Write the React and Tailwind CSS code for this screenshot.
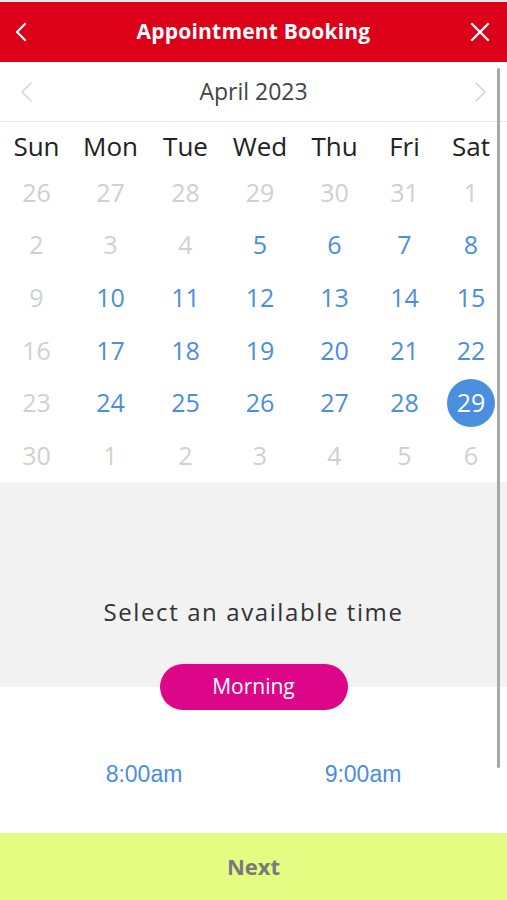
import { useState } from "react";

const weekdays = ["Sun", "Mon", "Tue", "Wed", "Thu", "Fri", "Sat"];

// April 2023 grid, leading/trailing days from neighbouring months
const weeks = [
  [26, 27, 28, 29, 30, 31, 1],
  [2, 3, 4, 5, 6, 7, 8],
  [9, 10, 11, 12, 13, 14, 15],
  [16, 17, 18, 19, 20, 21, 22],
  [23, 24, 25, 26, 27, 28, 29],
  [30, 1, 2, 3, 4, 5, 6],
];

function dayState(weekIndex, day) {
  if (weekIndex === 0 && day > 7) return "muted";
  if (weekIndex === 5) return "muted";
  if (day < 5 && weekIndex < 2) return "muted";
  if ([9, 16, 23].includes(day)) return "muted";
  return "open";
}

export default function App() {
  const [selected, setSelected] = useState(29);

  return (
    <div className="relative w-[507px] h-[900px] overflow-hidden bg-white flex flex-col font-['Open_Sans',sans-serif]">
      <div className="h-[2px] bg-[#e9e9e9]" />

      <header className="h-[60px] bg-[#dc0018] grid grid-cols-[48px_1fr_48px] items-center text-white">
        <div className="flex justify-start pl-[14px]">
          <svg width="14" height="20" viewBox="0 0 14 20" fill="none" stroke="white" strokeWidth="2.2" strokeLinecap="round" strokeLinejoin="round">
            <path d="M11 2 L3 10 L11 18" />
          </svg>
        </div>
        <h1 className="text-center text-[21px] font-bold tracking-[0.2px]">Appointment Booking</h1>
        <div className="flex justify-end pr-[16px]">
          <svg width="22" height="22" viewBox="0 0 22 22" fill="none" stroke="white" strokeWidth="2.4" strokeLinecap="round">
            <path d="M3 3 L19 19 M19 3 L3 19" />
          </svg>
        </div>
      </header>

      <div className="h-[60px] border-b border-[#e6e6e6] flex items-center justify-between px-[20px]">
        <svg width="13" height="20" viewBox="0 0 13 20" fill="none" stroke="#d6d6d6" strokeWidth="1.6" strokeLinecap="round">
          <path d="M11 1 L2 10 L11 19" />
        </svg>
        <span className="text-[23px] text-[#444]">April 2023</span>
        <svg width="13" height="20" viewBox="0 0 13 20" fill="none" stroke="#d6d6d6" strokeWidth="1.6" strokeLinecap="round">
          <path d="M2 1 L11 10 L2 19" />
        </svg>
      </div>

      <div className="grid grid-cols-[73px_75px_75px_74px_75px_65px_68px] h-[44px] items-center pt-[4px]">
        {weekdays.map((w) => (
          <div key={w} className="text-center text-[26px] text-[#222]">
            {w}
          </div>
        ))}
      </div>

      {weeks.map((week, wi) => (
        <div key={wi} className="grid grid-cols-[73px_75px_75px_74px_75px_65px_68px] h-[52.67px] items-center">
          {week.map((day, di) => {
            const state = dayState(wi, day);
            const isSelected = state === "open" && day === selected;
            return (
              <div key={di} className="flex justify-center">
                {isSelected ? (
                  <span className="w-[48px] h-[48px] rounded-full bg-[#4a8ee0] text-white text-[25px] flex items-center justify-center">
                    {day}
                  </span>
                ) : (
                  <span
                    onClick={() => state === "open" && setSelected(day)}
                    className={
                      state === "open"
                        ? "text-[25px] text-[#4a8ee0] cursor-pointer"
                        : "text-[25px] text-[#d0d0d0]"
                    }
                  >
                    {day}
                  </span>
                )}
              </div>
            );
          })}
        </div>
      ))}

      <section className="h-[205px] bg-[#f2f2f2] flex flex-col items-center justify-end pb-[57px]">
        <p className="text-[24px] text-[#333] tracking-[1.6px]">Select an available time</p>
      </section>

      <div className="flex justify-center -mt-[23px]">
        <button className="w-[188px] h-[46px] rounded-full bg-[#de0688] text-white text-[21px]">
          Morning
        </button>
      </div>

      <div className="flex pl-[34px] mt-[47px] font-['Liberation_Sans',sans-serif] text-[23px] text-[#4a8ee0]">
        <span className="w-[220px] text-center">8:00am</span>
        <span className="w-[218px] text-center">9:00am</span>
      </div>

      <div className="flex-1" />

      <button className="h-[67px] bg-[#e5fc83] text-[#7a7a7a] text-[22px] font-bold">Next</button>

      <div className="absolute left-[497px] top-[68px] w-[3px] h-[700px] rounded-full bg-[#a8a8a8]" />
    </div>
  );
}
